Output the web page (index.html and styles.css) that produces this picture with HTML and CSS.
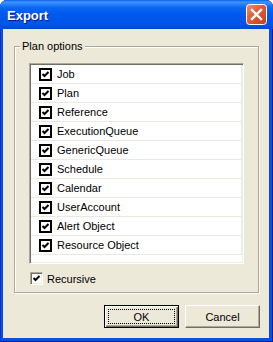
FILE: index.html
```html
<!DOCTYPE html>
<html lang="en">
<head>
    <meta charset="UTF-8">
    <title>Export</title>
    <link rel="stylesheet" href="styles.css">
</head>
<body>
    <div class="window">
        <div class="titlebar">
            <span class="title">Export</span>
            <span class="close">
                <svg width="21" height="21" viewBox="0 0 21 21">
                    <defs>
                        <linearGradient id="red" x1="0" y1="0" x2="1" y2="1">
                            <stop offset="0" stop-color="#f0906a"/>
                            <stop offset="0.45" stop-color="#e25a35"/>
                            <stop offset="1" stop-color="#c1401c"/>
                        </linearGradient>
                    </defs>
                    <rect x="0.5" y="0.5" width="20" height="20" rx="3" fill="url(#red)" stroke="#fff"/>
                    <path d="M6 6 L15 15 M15 6 L6 15" stroke="#fff" stroke-width="2.4" stroke-linecap="square"/>
                </svg>
            </span>
        </div>
        <div class="content">
            <div class="group">
                <div class="legend">Plan options</div>
                <ul class="list">
                    <li class="row"><span class="check"></span>Job</li>
                    <li class="row"><span class="check"></span>Plan</li>
                    <li class="row"><span class="check"></span>Reference</li>
                    <li class="row"><span class="check"></span>ExecutionQueue</li>
                    <li class="row"><span class="check"></span>GenericQueue</li>
                    <li class="row"><span class="check"></span>Schedule</li>
                    <li class="row"><span class="check"></span>Calendar</li>
                    <li class="row"><span class="check"></span>UserAccount</li>
                    <li class="row"><span class="check"></span>Alert Object</li>
                    <li class="row"><span class="check"></span>Resource Object</li>
                </ul>
                <label class="recursive"><span class="box"></span>Recursive</label>
            </div>
            <div class="buttons">
                <div class="btn default"><span class="focus">OK</span></div>
                <div class="btn">Cancel</div>
            </div>
        </div>
    </div>

    <script>
        // same check mark in every box
        const mark = '<svg width="13" height="13" viewBox="0 0 13 13"><path d="M3.5 6 L5.5 8 L9.5 4" fill="none" stroke="#000" stroke-width="2"/></svg>';
        document.querySelectorAll(".check, .box").forEach(b => b.innerHTML = mark);
    </script>
</body>
</html>
```

FILE: styles.css
```css
body {
    margin: 0;
    font-family: 'Liberation Sans', Arial, sans-serif;
    font-size: 11px;
    color: #000;
}
.window {
    width: 273px;
    height: 342px;
    display: flex;
    flex-direction: column;
    background: #0a4fe0;
    border-radius: 7px 7px 0 0;
    overflow: hidden;
    box-shadow: inset 1px 0 #0831d9, inset -1px 0 #001ea0, inset 0 -1px #001ea0;
}
.titlebar {
    height: 29px;
    flex: none;
    display: flex;
    align-items: center;
    justify-content: space-between;
    padding: 0 6px 0 7px;
    background: linear-gradient(to bottom, #0a5fe6 0, #3d95ff 2px, #2b83fb 4px, #0866f0 8px, #0058ee 50%, #0055e8 85%, #0046d4 100%);
}
.title {
    font-weight: bold;
    font-size: 13px;
    color: #fff;
    text-shadow: 1px 1px #0a1883;
    padding-top: 1px;
}
.close {
    width: 21px;
    height: 21px;
    display: block;
}
.content {
    flex: 1;
    margin: 0 4px 4px 3px;
    background: #ece9d8;
    display: flex;
    flex-direction: column;
}
.group {
    margin: 17px 10px 0 11px;
    height: 247px;
    box-sizing: border-box;
    border: 1px solid #aca899;
    box-shadow: inset 1px 1px #fff, 1px 1px #fff;
    padding: 0 14px 0 14px;
}
.legend {
    margin: -7px 0 0 -9px;
    width: fit-content;
    padding: 0 2px;
    line-height: 13px;
    background: #ece9d8;
}
.list {
    list-style: none;
    margin: 10px 0 0;
    padding: 0;
    width: 215px;
    height: 201px;
    box-sizing: border-box;
    background: #fff;
    border: 1px solid;
    border-color: #aca899 #fff #fff #aca899;
    box-shadow: inset 1px 1px #716f64, inset -1px -1px #f1efe2;
    padding: 1px;
}
.row {
    width: 202px;
    height: 18px;
    border-bottom: 1px solid #ebe9dd;
    border-right: 1px solid #ebe9dd;
    display: flex;
    align-items: center;
    padding-left: 8px;
    box-sizing: content-box;
}
.check {
    width: 13px;
    height: 13px;
    box-sizing: border-box;
    border: 2px solid #000;
    background: #fff;
    margin-right: 5px;
    display: flex;
}
.check svg {
    margin: -2px;
}
.recursive {
    display: flex;
    align-items: center;
    margin: 8px 0 0 1px;
}
.box {
    width: 13px;
    height: 13px;
    box-sizing: border-box;
    border: 1px solid;
    border-color: #aca899 #fff #fff #aca899;
    box-shadow: inset 1px 1px #716f64, inset -1px -1px #f1efe2;
    background: #fff;
    margin-right: 4px;
    display: flex;
}
.box svg {
    margin: -1px;
}
.buttons {
    margin-top: auto;
    display: flex;
    justify-content: flex-end;
    gap: 6px;
    padding: 0 9px 10px 0;
}
.btn {
    width: 75px;
    height: 23px;
    box-sizing: border-box;
    display: flex;
    align-items: center;
    justify-content: center;
    background: #ece9d8;
    border: 1px solid;
    border-color: #fff #716f64 #716f64 #fff;
    box-shadow: inset -1px -1px #aca899;
}
.btn.default {
    border: 1px solid #000;
    box-shadow: inset 1px 1px #fff, inset -1px -1px #716f64, inset -2px -2px #aca899;
    padding: 3px;
}
.focus {
    flex: 1;
    align-self: stretch;
    display: flex;
    align-items: center;
    justify-content: center;
    border: 1px dotted #000;
}
```
